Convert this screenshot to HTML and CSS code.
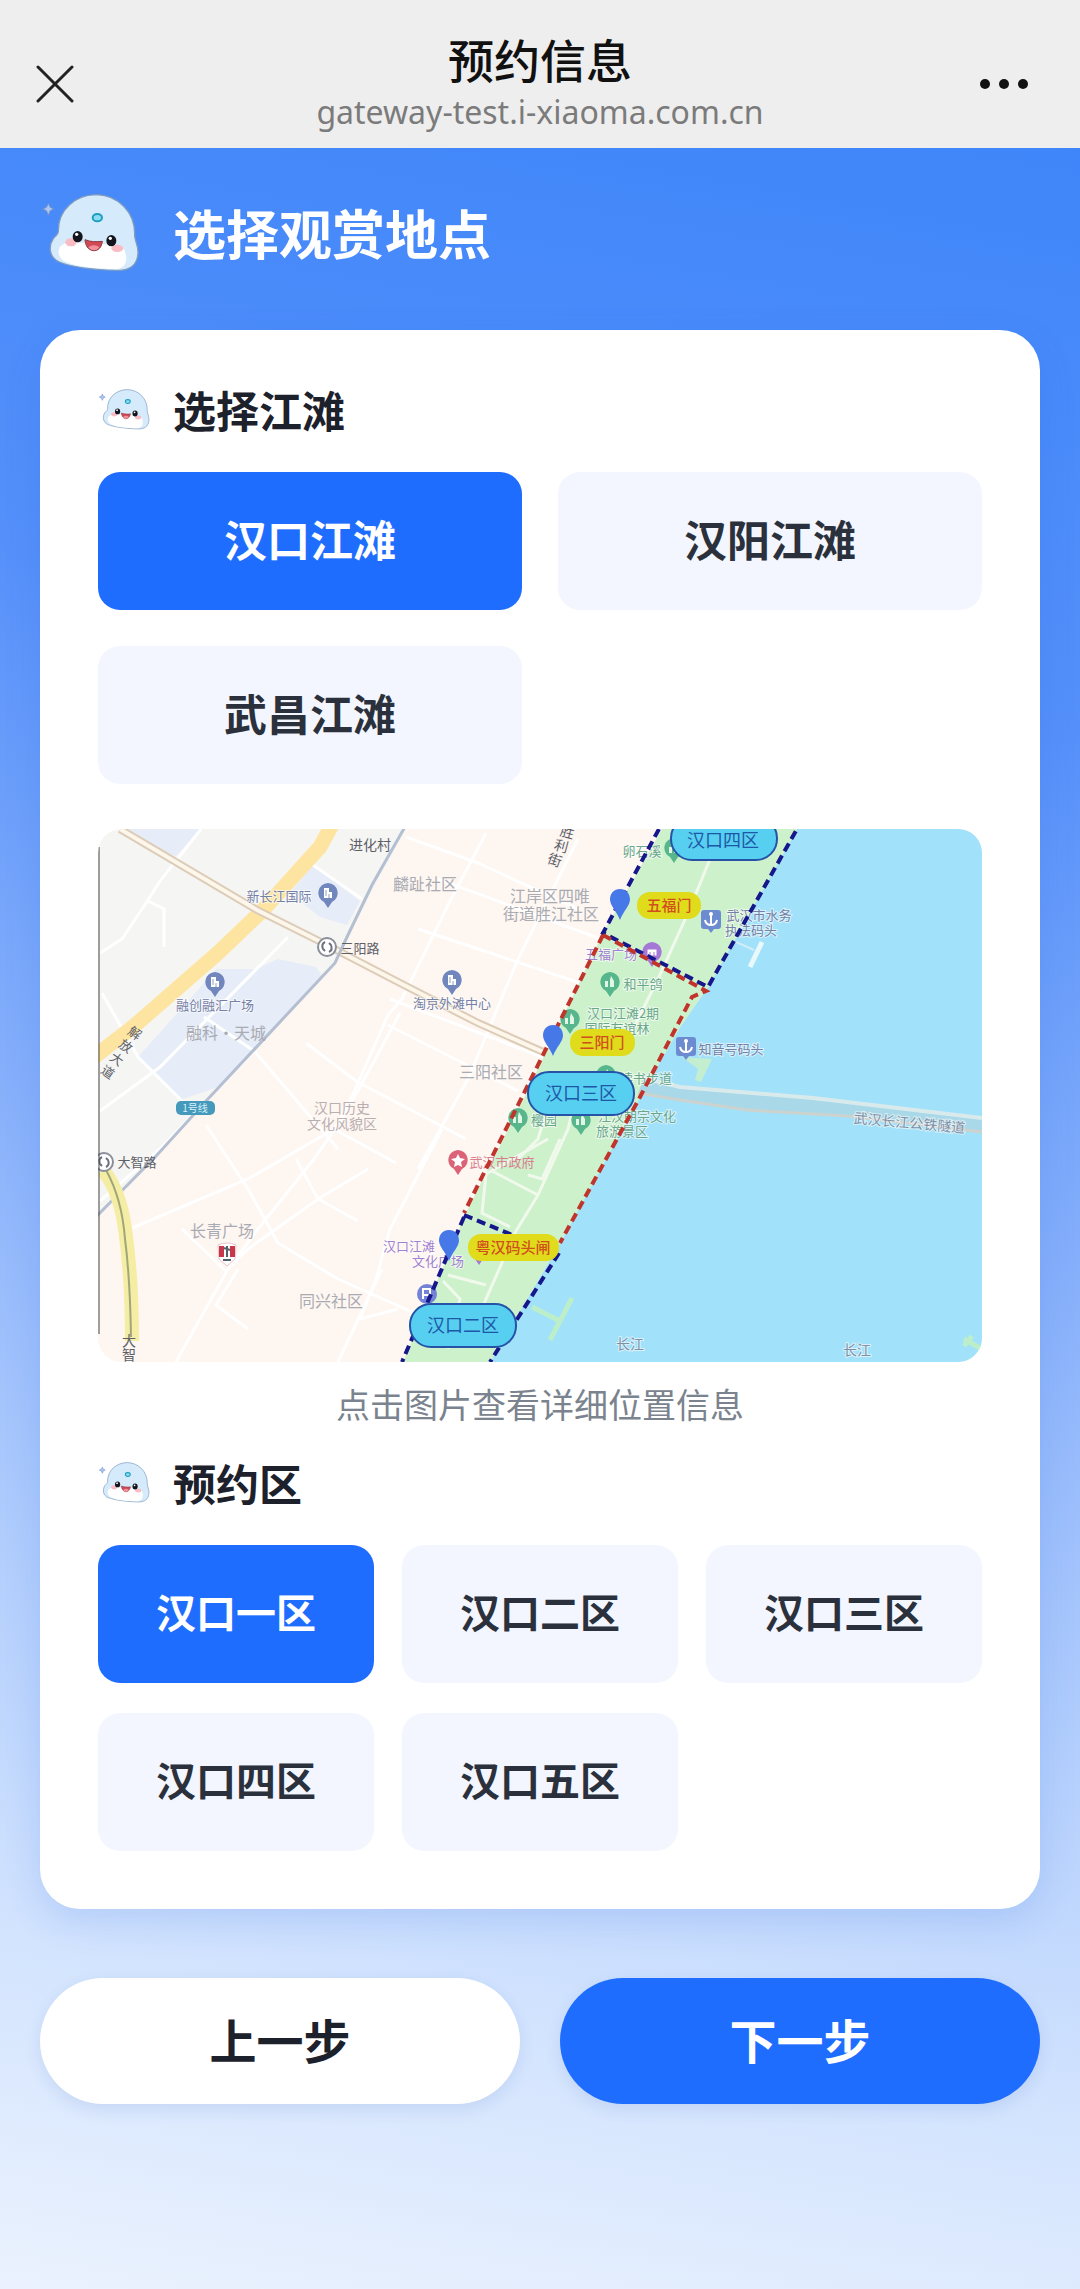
FILE: index.html
```html
<!DOCTYPE html>
<html lang="zh-CN">

<head>
    <meta charset="UTF-8">
    <meta name="viewport" content="width=device-width, initial-scale=1.0">
    <title>预约信息</title>
    <link rel="stylesheet" href="styles.css">
</head>

<body>
    <!-- 公用图形 -->
    <svg class="defs" width="0" height="0" aria-hidden="true">
        <symbol id="mascot" viewBox="30 60 300 240">
            <path d="M55 94 L61 106 L72 111 L61 116 L55 130 L49 116 L37 111 L49 106Z" fill="#a9c6f5" stroke="#6e8fc4" stroke-width="3" />
            <path class="body" d="M85 178C84 112 138 68 200 68C266 70 316 122 314 188C313 206 326 220 324 246C321 278 300 297 258 295C190 293 122 284 88 270C58 257 54 224 70 200C78 190 85 188 85 178Z" fill="#d5ebfc" />
            <path d="M92 222C110 205 135 214 160 212C200 210 250 222 280 228C292 250 296 284 262 291C200 290 130 284 100 266C84 254 82 234 92 222Z" fill="#fff" />
            <ellipse cx="202" cy="137" rx="14" ry="11" fill="#8fdcf0" stroke="#1b9fbe" stroke-width="6" />
            <ellipse cx="123" cy="211" rx="17" ry="12" fill="#f9bcc4" />
            <ellipse cx="262" cy="229" rx="18" ry="11" fill="#f9bcc4" />
            <ellipse cx="143" cy="194" rx="15" ry="17" fill="#14151c" />
            <ellipse cx="244" cy="206" rx="15" ry="17" fill="#14151c" />
            <circle cx="140" cy="187" r="5" fill="#fff" />
            <circle cx="241" cy="199" r="5" fill="#fff" />
            <path d="M165 203C182 210 198 210 217 208C215 226 205 237 190 236C174 234 166 220 165 203Z" fill="#cf4a55" stroke="#8e3542" stroke-width="3" />
            <path d="M175 226C184 217 200 218 208 226C200 238 184 238 175 226Z" fill="#f2909a" />
        </symbol>
        <symbol id="pin" viewBox="0 0 22 26">
            <path d="M11 0A10 10 0 0 1 15 19L11 25L7 19A10 10 0 0 1 11 0Z" />
        </symbol>
        <symbol id="building" viewBox="0 0 22 26">
            <path d="M11 0A10 10 0 0 1 15 19L11 25L7 19A10 10 0 0 1 11 0Z" />
            <path d="M7 5H12V9H15V15H7Z" fill="#fff" />
            <path d="M9 7V13M12 11V15" stroke="#8c9cc8" />
        </symbol>
        <symbol id="tree" viewBox="0 0 22 26">
            <path d="M11 0A10 10 0 0 1 15 19L11 25L7 19A10 10 0 0 1 11 0Z" />
            <path d="M6 9H9V15H6ZM12 4L15 9V15H11V8Z" fill="#e2f6e6" />
        </symbol>
        <symbol id="anchor" viewBox="0 0 22 26">
            <path d="M4 1H18Q21 1 21 4V17Q21 20 18 20H14L11 24L8 20H4Q1 20 1 17V4Q1 1 4 1Z" fill="#6d8bd0" />
            <path d="M11 6V16M5 11Q6 16 11 16Q16 16 17 11" fill="none" stroke="#fff" stroke-width="2" />
            <circle cx="11" cy="5" r="2" fill="#fff" />
        </symbol>
        <symbol id="drop" viewBox="0 0 22 31">
            <path d="M11 0C17 0 21 4 21 11C20 18 15 21 11 31C7 21 2 18 1 11C1 4 5 0 11 0Z" fill="#4678e8" />
        </symbol>
        <symbol id="metro" viewBox="0 0 22 22">
            <circle cx="11" cy="11" r="9" fill="#fff" stroke="#8b8f9a" stroke-width="2" />
            <path d="M9 6Q5 8 7 13L9 15M13 16Q17 14 15 9L13 7" fill="none" stroke="#6d7180" stroke-width="2" />
        </symbol>
    </svg>

    <header class="appbar">
        <button class="icon-btn" type="button" aria-label="关闭">
            <svg width="38" height="38" viewBox="0 0 38 38">
                <path d="M2 2L36 36M36 2L2 36" stroke="#222" stroke-width="3" stroke-linecap="round" />
            </svg>
        </button>
        <div class="appbar-text">
            <div class="appbar-title">预约信息</div>
            <div class="appbar-url">gateway-test.i-xiaoma.com.cn</div>
        </div>
        <button class="icon-btn" type="button" aria-label="更多">
            <svg width="50" height="12" viewBox="0 0 50 12" fill="#111">
                <circle cx="6" cy="6" r="5" />
                <circle cx="25" cy="6" r="5" />
                <circle cx="44" cy="6" r="5" />
            </svg>
        </button>
    </header>

    <main class="page">
        <div class="hero">
            <svg class="mascot-lg" aria-hidden="true"><use href="#mascot" /></svg>
            <h1>选择观赏地点</h1>
        </div>

        <div class="card">
            <h2 class="section-title">
                <svg class="mascot-sm" aria-hidden="true"><use href="#mascot" /></svg>选择江滩
            </h2>
            <div class="beach-list">
                <button class="option active" type="button">汉口江滩</button>
                <button class="option" type="button">汉阳江滩</button>
                <button class="option" type="button">武昌江滩</button>
            </div>

            <button class="map-btn" type="button" aria-label="查看地图">
                <svg class="map" viewBox="0 0 884 533">
                    <rect width="884" height="533" fill="#fef6f1" />
                    <path d="M0 0H308L249 108L237 134L109 271L2 386H0Z" fill="#f5f5f3" />
                    <!-- 淡蓝色地块 -->
                    <g fill="#e6ecf8">
                        <path d="M30 0H103L78 27Q54 22 30 0Z" />
                        <path d="M215 36L262 72L249 96L222 88L192 64Z" />
                        <path d="M158 140L180 130L218 138L225 148L120 258L82 271L40 228L92 170L118 140Z" />
                    </g>
                    <!-- 小路 -->
                    <g class="streets">
                        <path d="M103 0L62 52L48 74L24 110L2 124M50 72L66 80L66 118" />
                        <path d="M190 108L62 238L2 282M4 164L40 228L92 280M106 188L156 222L240 320M212 34L264 70M156 222L62 320L2 372" />
                        <path d="M388 4L350 76L304 170L290 186L244 290L216 330L160 400L130 440L78 533" />
                        <path d="M308 8L380 34L480 80M340 50L530 120M320 100L500 160M292 170L450 230M290 196L420 262M208 214L258 252L368 310M302 184L260 262L236 300L298 334M236 300L150 350L20 405" />
                        <path d="M108 296L150 360L180 414L240 450L330 490M198 330L220 370L260 392M140 440L118 476L150 500M270 340L220 370L150 420L128 442L84 400M284 440L240 533M344 300L292 400L278 450L262 490L300 480M480 10L420 130L370 250L320 340" />
                    </g>
                    <!-- 主干道 -->
                    <path d="M234 -4L222 18L165 81L120 124L35 198L-4 228" fill="none" stroke="#fde5a1" stroke-width="15" />
                    <path d="M22 0L159 81L225 114L302 154L380 194L452 226L520 250" fill="none" stroke="#dcccb8" stroke-width="8" />
                    <path d="M22 0L159 81L225 114L302 154L380 194L452 226L520 250" fill="none" stroke="#fdf6ea" stroke-width="4" />
                    <path d="M308 -4L274 56L249 108L237 134L109 271L59 326L-2 388" fill="none" stroke="#b4bfd1" stroke-width="3" />
                    <path d="M5 341Q22 362 27 400Q34 448 34 512" fill="none" stroke="#f5eda4" stroke-width="14" />
                    <path d="M8 341Q24 370 27 410Q32 448 33 508" fill="none" stroke="#9fa77a" stroke-width="2" />
                    <!-- 长江与江滩绿地 -->
                    <path d="M699 0H884V533H392L462 414L542 268L582 198L610 158Z" fill="#a1e1fa" />
                    <path d="M564 0H699L610 158L582 198L542 268L462 414L392 533H305L367 386L425 271L505 104Z" fill="#cdf1cb" />
                    <path d="M584 228L614 230L603 253L597 251L600 240Z" fill="#c3eed0" />
                    <path d="M434 478L460 491M474 469L452 511M866 510L884 520M874 507L866 517" stroke="#bcefc9" stroke-width="5" />
                    <path d="M638 113L656 121" stroke="#cfeef8" stroke-width="2" />
                    <path d="M664 113L652 138" stroke="#e8f8fb" stroke-width="5" />
                    <g fill="none" stroke="#f1f9ec" stroke-width="3">
                        <path d="M612 30L590 84L560 150L530 210M450 310L388 345L384 384L412 398M394 342L440 366L470 300L478 268M430 346L444 350L462 310M440 366L418 402L388 470L376 500M350 446L388 456M345 452L362 470L350 520M452 270L440 310L420 330" />
                    </g>
                    <!-- 过江隧道 -->
                    <path d="M545 251L582 258L715 269L884 289L884 302L749 287L649 281L582 271L540 265Z" fill="#a9d8e8" />
                    <path d="M545 249L582 258L715 269L884 289" fill="none" stroke="#d9eaec" stroke-width="4" />
                    <path d="M540 264L582 271L649 281L749 287L884 303" fill="none" stroke="#ccd3cf" stroke-width="3" />

                    <!-- 地点图标 -->
                    <g fill="#7186bd">
                        <use href="#building" x="219" y="54" width="22" height="26" />
                        <use href="#building" x="106" y="143" width="22" height="26" />
                        <use href="#building" x="343" y="141" width="22" height="26" />
                    </g>
                    <g fill="#58b68c">
                        <use href="#tree" x="501" y="143" width="22" height="26" />
                        <use href="#tree" x="461" y="180" width="22" height="26" />
                        <use href="#tree" x="565" y="9" width="22" height="26" />
                        <use href="#tree" x="409" y="279" width="22" height="26" />
                        <use href="#tree" x="472" y="281" width="22" height="26" />
                        <use href="#tree" x="497" y="236" width="22" height="26" />
                    </g>
                    <use href="#pin" x="349" y="321" width="22" height="26" fill="#dc6277" />
                    <path d="M360 325L362 329L367 330L363 333L364 338L360 336L356 338L357 333L353 330L358 329Z" fill="#fff" />
                    <use href="#pin" x="543" y="113" width="22" height="26" fill="#a578d6" />
                    <path d="M549 120H559V127H549ZM552 123V127M556 123V127" fill="#fff" stroke="#a578d6" />
                    <use href="#pin" x="370" y="411" width="22" height="26" fill="#a578d6" />
                    <circle cx="329" cy="465" r="10" fill="#7482d6" />
                    <path d="M325 470V460H332V466H326" fill="none" stroke="#fff" stroke-width="2" />
                    <use href="#anchor" x="602" y="80" width="22" height="26" />
                    <use href="#anchor" x="577" y="207" width="22" height="26" />
                    <use href="#metro" x="218" y="107" width="22" height="22" />
                    <use href="#metro" x="-5" y="322" width="22" height="22" />
                    <path d="M120 416Q129 412 138 416L137 430L129 437L121 430Z" fill="#fff" stroke="#e6c5ca" />
                    <path d="M121 417H126V428H121ZM132 417H137V428H132Z" fill="#c8384c" />
                    <path d="M129 417V428M126 419L132 421M125 431H133" stroke="#54616a" stroke-width="2" />
                    <rect x="78" y="272" width="39" height="14" rx="5" fill="#459abb" />

                    <!-- 地名 -->
                    <g class="label">
                        <text x="97" y="283" class="line-no">1号线</text>
                        <g class="dark">
                            <text x="272" y="21" class="md">进化村</text>
                            <text x="262" y="124">三阳路</text>
                            <text x="39" y="338">大智路</text>
                            <text x="31" y="517" class="md">大</text>
                            <text x="31" y="531" class="md">智</text>
                            <text transform="translate(34 208) rotate(35)">解</text>
                            <text transform="translate(25 221) rotate(35)">放</text>
                            <text transform="translate(16 234) rotate(35)">大</text>
                            <text transform="translate(7 247) rotate(35)">道</text>
                            <text transform="translate(468 8) rotate(15)" class="md">胜</text>
                            <text transform="translate(462 22) rotate(15)" class="md">利</text>
                            <text transform="translate(455 36) rotate(20)" class="md">街</text>
                        </g>
                        <g class="poi">
                            <text x="181" y="72">新长江国际</text>
                            <text x="117" y="181">融创融汇广场</text>
                            <text x="354" y="179">淘京外滩中心</text>
                            <text x="661" y="91">武汉市水务</text>
                            <text x="653" y="106">执法码头</text>
                            <text x="633" y="225">知音号码头</text>
                        </g>
                        <g class="area">
                            <text x="128" y="210">融科·天城</text>
                            <text x="327" y="61">麟趾社区</text>
                            <text x="452" y="73">江岸区四唯</text>
                            <text x="453" y="91">街道胜江社区</text>
                            <text x="393" y="249">三阳社区</text>
                            <text x="124" y="408">长青广场</text>
                            <text x="233" y="478">同兴社区</text>
                        </g>
                        <g class="history">
                            <text x="244" y="284">汉口历史</text>
                            <text x="244" y="300">文化风貌区</text>
                        </g>
                        <g class="park">
                            <text x="544" y="27">卵石溪</text>
                            <text x="545" y="160">和平鸽</text>
                            <text x="525" y="189">汉口江滩2期</text>
                            <text x="519" y="204">国际友谊林</text>
                            <text x="548" y="254">读书步道</text>
                            <text x="446" y="296">樱园</text>
                            <text x="539" y="292">江汉朝宗文化</text>
                            <text x="524" y="307">旅游景区</text>
                        </g>
                        <g class="purple">
                            <text x="513" y="130">五福广场</text>
                            <text x="311" y="422">汉口江滩</text>
                            <text x="340" y="437">文化广场</text>
                        </g>
                        <text x="404" y="338" class="red">武汉市政府</text>
                        <g class="river">
                            <text x="532" y="520">长江</text>
                            <text x="759" y="526">长江</text>
                            <text transform="translate(811 299) rotate(5)">武汉长江公铁隧道</text>
                        </g>
                    </g>

                    <!-- 分区边界 -->
                    <g class="border">
                        <path d="M561 0L505 104L610 158L699 0" stroke="#17178c" />
                        <path d="M366 388L304 533M366 386L424 410M461 424L392 533" stroke="#17178c" />
                        <path d="M505 106L366 384M505 106L608 162L594 168L542 268L462 414" stroke="#c0342b" />
                    </g>
                    <use href="#drop" x="511" y="60" width="22" height="31" />
                    <use href="#drop" x="444" y="196" width="22" height="31" />
                    <use href="#drop" x="340" y="401" width="22" height="31" />

                    <!-- 闸口和分区名称 -->
                    <g class="gate">
                        <rect x="539" y="63" width="64" height="27" rx="13" />
                        <text x="571" y="82">五福门</text>
                        <rect x="472" y="200" width="65" height="27" rx="13" />
                        <text x="504" y="219">三阳门</text>
                        <rect x="370" y="405" width="91" height="27" rx="13" />
                        <text x="415" y="424">粤汉码头闸</text>
                    </g>
                    <g class="zone">
                        <rect x="573" y="-12" width="106" height="43" rx="21" />
                        <text x="625" y="18">汉口四区</text>
                        <rect x="430" y="243" width="106" height="43" rx="21" />
                        <text x="483" y="271">汉口三区</text>
                        <rect x="312" y="475" width="106" height="43" rx="21" />
                        <text x="365" y="503">汉口二区</text>
                    </g>
                    <path d="M1 18V505" stroke="#444" stroke-width="1" />
                </svg>
            </button>
            <p class="tip">点击图片查看详细位置信息</p>

            <h2 class="section-title">
                <svg class="mascot-sm" aria-hidden="true"><use href="#mascot" /></svg>预约区
            </h2>
            <div class="zone-list">
                <button class="option active" type="button">汉口一区</button>
                <button class="option" type="button">汉口二区</button>
                <button class="option" type="button">汉口三区</button>
                <button class="option" type="button">汉口四区</button>
                <button class="option" type="button">汉口五区</button>
            </div>
        </div>

        <div class="footer">
            <button class="step" type="button">上一步</button>
            <button class="step next" type="button">下一步</button>
        </div>
    </main>
</body>

</html>
```
FILE: styles.css
```css
* {
    box-sizing: border-box;
}

body {
    display: flex;
    flex-direction: column;
    margin: 0;
    min-height: 100vh;
    font-family: "Noto Sans CJK SC", "Noto Sans", sans-serif;
    color: #1d212b;
}

button {
    padding: 0;
    border: 0;
    background: none;
    font-family: inherit;
    color: inherit;
    cursor: pointer;
}

h1,
h2,
p {
    margin: 0;
}

.defs {
    position: absolute;
}

/* 顶部导航 */
.appbar {
    display: flex;
    justify-content: space-between;
    align-items: center;
    height: 148px;
    padding: 20px 36px 0;
    background-color: #eee;
}

.icon-btn {
    display: flex;
    align-items: center;
    width: 65px;
    height: 50px;
}

.appbar-text {
    padding-bottom: 4px;
    text-align: center;
}

.appbar-title {
    line-height: 60px;
    font-size: 46px;
    font-weight: 500;
    color: #111;
}

.appbar-url {
    line-height: 48px;
    font-family: "Noto Sans", sans-serif;
    font-size: 32px;
    color: #7b7b7b;
}

.page {
    flex: 1;
    padding: 0 40px 60px;
    background: linear-gradient(190deg, #3f86fa 0%, #5590fa 25%, #8ab2fb 50%, #b5d0fd 70%, #d3e4fe 85%, #ebf2fe 100%);
}

.hero {
    display: flex;
    align-items: center;
    gap: 33px;
    height: 182px;
    padding-bottom: 14px;
}

.hero h1 {
    font-size: 53px;
    color: #fff;
}

.mascot-lg {
    width: 100px;
    height: 80px;
}

.mascot-lg .body {
    stroke: #6f93c8;
}

.mascot-sm {
    width: 52px;
    height: 42px;
}

.body {
    stroke: #7f9cc0;
    stroke-width: 4;
}

.card {
    padding: 48px 58px 58px;
    border-radius: 40px;
    background-color: #fff;
    box-shadow: 0 12px 36px rgba(40, 100, 220, .16);
}

.section-title {
    display: flex;
    align-items: center;
    gap: 23px;
    margin-bottom: 32px;
    line-height: 62px;
    font-size: 43px;
}

.beach-list,
.zone-list {
    display: grid;
    grid-template-columns: repeat(2, 1fr);
    gap: 36px;
}

.zone-list {
    grid-template-columns: repeat(3, 1fr);
    gap: 30px 28px;
}

.option {
    height: 138px;
    padding-bottom: 6px;
    border-radius: 22px;
    background-color: #f3f6fe;
    font-size: 43px;
    font-weight: 700;
    color: #2b313c;
}

.zone-list .option {
    font-size: 40px;
}

.option.active {
    background-color: #1f6dff;
    color: #fff;
}

/* 地图 */
.map-btn {
    display: block;
    width: 100%;
    margin-top: 45px;
    border-radius: 24px;
    overflow: hidden;
}

.map {
    display: block;
    width: 100%;
}

.streets {
    fill: none;
    stroke: #fff;
    stroke-width: 3;
}

.label {
    font-size: 13px;
    text-anchor: middle;
}

.label .dark {
    fill: #5d6068;
}

.label .md {
    font-size: 14px;
}

.label .line-no {
    font-size: 10px;
    fill: #d8f1fa;
}

.poi {
    fill: #7480a5;
}

.area {
    font-size: 16px;
    fill: #a9abb3;
}

.history {
    font-size: 14px;
    fill: #b9aeb0;
}

.park {
    fill: #69a78b;
}

.purple {
    fill: #a081cf;
}

.red {
    fill: #d97f90;
}

.river {
    font-size: 14px;
    fill: #7f8fa6;
}

.poi,
.park,
.purple,
.river {
    paint-order: stroke;
    stroke: rgba(255, 255, 255, .6);
    stroke-width: 2;
}

.border {
    fill: none;
    stroke-width: 4;
    stroke-dasharray: 9 5;
}

.gate {
    font-size: 15px;
    font-weight: 500;
    text-anchor: middle;
    fill: #d0501c;
}

.gate rect {
    fill: #e0dc1c;
}

.zone {
    font-size: 18px;
    text-anchor: middle;
    fill: #1d58a8;
}

.zone rect {
    fill: #57cff0;
    stroke: #2553a8;
    stroke-width: 2;
}

.tip {
    margin: 17px 0 22px;
    line-height: 50px;
    font-size: 34px;
    text-align: center;
    color: #7b838e;
}

/* 底部按钮 */
.footer {
    display: flex;
    gap: 40px;
    margin-top: 69px;
}

.step {
    flex: 1;
    height: 126px;
    padding-bottom: 6px;
    border-radius: 64px;
    background-color: #fff;
    box-shadow: 0 6px 16px rgba(40, 90, 180, .12);
    font-size: 47px;
    font-weight: 700;
}

.step.next {
    background-color: #1f6dff;
    color: #fff;
}
```
